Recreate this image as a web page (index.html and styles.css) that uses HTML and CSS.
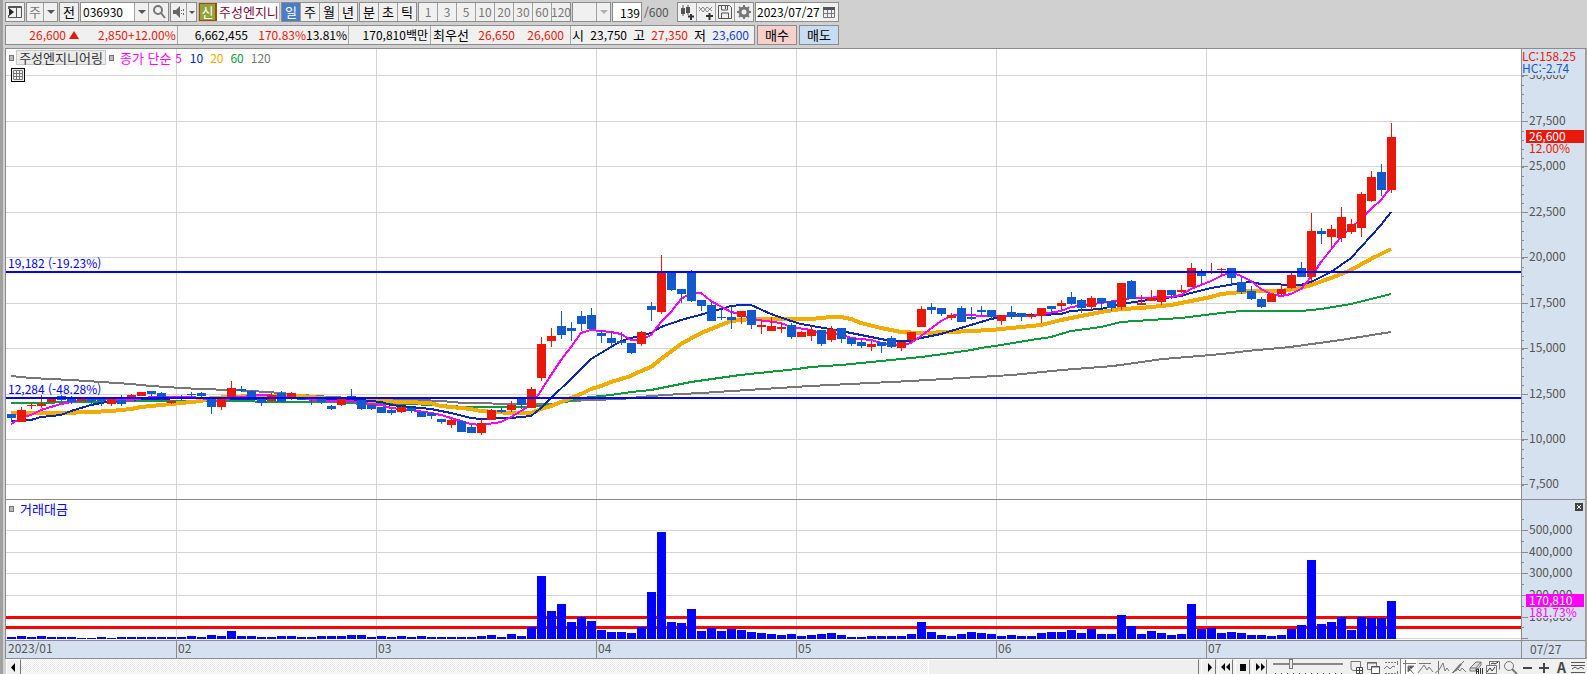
FILE: index.html
```html
<!DOCTYPE html>
<html lang="ko">
<head>
<meta charset="utf-8">
<title>주성엔지니어링 차트</title>
<link rel="stylesheet" href="styles.css">
</head>
<body>
<div class="window">
<header class="toolbar">
  <button class="btn icon-btn" aria-label="패널"><svg width="16" height="14"><path d="M1.500 4V1.500H14.500V12.500H1.500V10M9.500 2V12M1 2.500H15" fill="none" stroke="#555"/><path d="M2 3v8l5-4z" fill="#222"/></svg></button>
  <div class="group combo-kind">
    <span class="cell muted">주</span><button class="cell drop" aria-label="종류 선택"><i class="caret"></i></button>
  </div>
  <button class="btn sq">전</button>
  <div class="group code">
    <input class="field code-field" value="036930" aria-label="종목코드"><button class="cell drop" aria-label="종목 목록"><i class="caret"></i></button>
    <button class="cell search" aria-label="검색"><svg width="16" height="16"><circle cx="7" cy="6" r="4" fill="none" stroke="#777" stroke-width="2"/><path d="M10 9l4 5" stroke="#777" stroke-width="2"/></svg></button>
  </div>
  <div class="group sound">
    <button class="cell" aria-label="소리"><svg width="16" height="14"><path d="M2 5h3l4-4v12L5 9H2z" fill="#666"/><path d="M10.500 5v1M10.500 8v1M12.500 4v2M12.500 8v2" stroke="#666"/></svg></button><button class="cell drop narrow" aria-label="소리 메뉴"><i class="caret small"></i></button>
  </div>
  <div class="stock"><span class="credit">신</span><span class="stock-name">주성엔지니</span></div>
  <div class="group tabs">
    <button class="cell on">일</button><button class="cell">주</button><button class="cell">월</button><button class="cell">년</button>
  </div>
  <div class="group tabs">
    <button class="cell">분</button><button class="cell">초</button><button class="cell">틱</button>
  </div>
  <div class="group tabs minutes">
    <button class="cell">1</button><button class="cell">3</button><button class="cell">5</button><button class="cell">10</button><button class="cell">20</button><button class="cell">30</button><button class="cell">60</button><button class="cell">120</button>
  </div>
  <div class="group blank"><span class="cell"></span><button class="cell drop" disabled aria-label="주기"><i class="caret pale"></i></button></div>
  <div class="count"><input class="group field count-field" value="139" aria-label="봉 개수"><span class="total">/600</span></div>
  <div class="group tools">
    <button class="cell" aria-label="봉 추가"><svg width="16" height="16"><path d="M2 4h4v6H2zM7 3h4v6H7z" fill="#555"/><path d="M4 1v11M9 1v10" stroke="#555"/><path d="M9 12.500h6M12 10v6" stroke="#333" stroke-width="2"/></svg></button><button class="cell" aria-label="지표 추가"><svg width="16" height="16"><path d="M1 7l4-4 4 5 5-5M1 3l4 5 4-5 5 4" fill="none" stroke="#888"/><path d="M8 12h7M11.500 9v7" stroke="#333" stroke-width="2"/></svg></button><button class="cell" aria-label="저장"><svg width="16" height="16"><path d="M1.500 1.500h11l2 2v11h-13zM4.500 2v4h6V2M4.500 14V9h7v5M8.500 2v3" fill="none" stroke="#555"/></svg></button><button class="cell" aria-label="설정"><svg width="16" height="16"><circle cx="8" cy="8" r="4" fill="none" stroke="#777" stroke-width="3"/><path d="M8 1v3M8 12v3M1 8h3M12 8h3M3 3l2 2M11 11l2 2M3 13l2-2M11 5l2-2" stroke="#777" stroke-width="2"/></svg></button>
  </div>
  <div class="group date"><input class="field date-field" value="2023/07/27" aria-label="날짜"><button class="cell" aria-label="달력"><svg width="14" height="13"><path d="M1.500 2.500h11v9h-11zM5.500 3v8M9.500 3v8M2 7.500h11" fill="none" stroke="#777"/><path d="M1 1h12v3H1z" fill="#555"/></svg></button></div>
</header>

<div class="quote-row">
  <div class="quote">
    <span class="q q1 up">26,600</span><i class="tri"></i><span class="q q2 up">2,850</span><span class="q q3 up sep">+12.00%</span>
    <span class="q q4">6,662,455</span><span class="q q5 up">170.83%</span><span class="q q6 sep">13.81%</span>
    <span class="q q7 sep">170,810백만</span>
    <span class="q q8">최우선</span><span class="q q9 up">26,650</span><span class="q q10 up sep">26,600</span>
    <span class="q q11">시</span><span class="q q12">23,750</span><span class="q q13">고</span><span class="q q12 up">27,350</span><span class="q q13">저</span><span class="q q12 down">23,600</span>
  </div>
  <button class="order buy">매수</button>
  <button class="order sell">매도</button>
</div>

<main class="chart">
  <section class="plot price">
    <svg id="price" role="img" aria-label="일봉 차트"></svg>
    <div class="legend">
      <i class="dot"></i><button class="name">주성엔지니어링</button><i class="dot"></i>
      <span class="ma5">종가 단순&nbsp;<b>5</b></span><span class="ma10">10</span><span class="ma20">20</span><span class="ma60">60</span><span class="ma120">120</span>
    </div>
    <button class="grid-btn" aria-label="표 보기"><svg width="10" height="10"><path d="M.5.500h9v9h-9zM3.500 0v10M6.500 0v10M0 3.500h10M0 6.500h10" fill="none" stroke="#777"/></svg></button>
  </section>
  <section class="axis price-axis"><svg id="price-axis"></svg></section>
  <section class="plot volume">
    <svg id="volume" role="img" aria-label="거래대금"></svg>
    <div class="legend"><i class="dot"></i><span class="vol-name">거래대금</span></div>
  </section>
  <section class="axis volume-axis"><svg id="volume-axis"></svg><button class="close" aria-label="닫기"><svg width="8" height="8"><path d="M2 2l4 4M6 2l-4 4" stroke="#fff"/></svg></button></section>
  <section class="dates"><svg id="dates"></svg></section>
  <section class="axis last-date">07/27</section>
</main>

<footer class="bottom">
  <button class="nav" aria-label="왼쪽"><svg width="14" height="14"><path d="M8 3v9L4 7.500z"/></svg></button>
  <div class="track"><div class="thumb"></div></div>
  <div class="player">
    <button class="nav" aria-label="재생"><svg width="14" height="14"><path d="M6 3v9l4-4.500z"/></svg></button>
    <button class="nav" aria-label="뒤로"><svg width="14" height="14"><path d="M6 3v8L2 7zM11 3v8L7 7z"/></svg></button>
    <button class="nav" aria-label="정지"><svg width="14" height="14"><path d="M4 4h6v7H4z"/></svg></button>
    <button class="nav" aria-label="앞으로"><svg width="14" height="14"><path d="M3 3v8l4-4zM8 3v8l4-4z"/></svg></button>
  </div>
  <input class="zoomer" type="range" min="0" max="100" value="24" aria-label="확대">
  <div class="draw">
    <button aria-label="새 창"><svg width="17" height="15"><path d="M2 1.500h9.500v9H4L2 9z"/><path d="M7.500 7.500h6v6h-6zM7 10.500h7M10.500 7v7" fill="#fff" stroke="#444"/></svg></button>
    <button aria-label="창 복사"><svg width="17" height="15"><path d="M1.500 2.500h9v7h-9z"/><path d="M5.500 6.500h8v7h-8z" fill="#fff" stroke="#555"/><path d="M1 3h10M5 7h9" stroke="#555"/></svg></button>
    <button aria-label="구간"><svg width="17" height="15"><path d="M2 2.500h12M2 13.500h12" stroke-dasharray="2 1"/><path d="M1 9l3-3 3 3 3-3 2 1M14.500 1v4M14.500 11v4"/></svg></button>
    <button class="on" aria-label="선택"><svg width="17" height="15"><path d="M4.500 0v15M2 3.500h13"/><path d="M7 6v6l2-2 4 4M7 6h6l-3 3" fill="#555"/></svg></button>
    <button aria-label="수평선"><svg width="17" height="15"><path d="M2 3.500h12M1 13l6-8 3 5 2-3 4 5"/></svg></button>
    <button aria-label="수직선"><svg width="17" height="15"><path d="M4.500 1v14M1 13l4-3 4-7 2 8 2-3 2 3"/></svg></button>
    <button aria-label="추세선"><svg width="17" height="15"><path d="M2 13L13 1M1 13l5-5 3 3 2-3 4 4"/><path d="M4 11l6-7" stroke-width="2"/></svg></button>
    <button aria-label="모두 지우기"><svg width="17" height="15"><path d="M2 8l6-6h5v3L8 11H2zM2 8h6v3M8 8l5-6" fill="#ddd"/><path d="M8.500 14V9h2v5M8 11.500h3M12.500 8v6M14.500 8v6" stroke="#333"/></svg></button>
    <button aria-label="차트 복사"><svg width="17" height="15"><path d="M4.500 1.500h10v8M4.500 1v4M1.500 5.500h10v8h-10z"/><path d="M2 12l3-4 2 3 3-4M6 4l2-1 2 1 3-2" stroke="#333"/></svg></button>
    <button aria-label="돋보기"><svg width="17" height="15"><circle cx="7" cy="6" r="4.500"/><path d="M10 9l5 5" stroke-width="2"/></svg></button>
    <button aria-label="축소"><svg width="17" height="15"><path d="M4 8h9" stroke="#444" stroke-width="2"/></svg></button>
    <button aria-label="확대"><svg width="17" height="15"><path d="M3 8h10M8 3v10" stroke="#444" stroke-width="2"/></svg></button>
    <button class="letter" aria-label="글자">A</button>
    <button aria-label="목록"><svg width="17" height="15"><path d="M1 2.500h14M1 5.500h14M2 9l3-2 3 2 3-2 3 2M1 12.500h14" stroke="#555"/></svg></button>
  </div>
</footer>
</div>
<script src="chart.js"></script>
</body>
</html>
```

FILE: styles.css
```css
* { box-sizing: border-box; }
:root {
  --line: #8c8c8c;
  --axis: #d6e1ef;
  --red: #e8190a;
  --blue: #125acb;
  --face: #f0f0f0;
}
body {
  margin: 0;
  height: 100vh;
  overflow: hidden;
  background: #d0d0d0;
  font-family: "Noto Sans CJK KR", sans-serif;
  font-size: 12px;
  line-height: 18px;
  color: #000;
}
button, input { font: inherit; color: inherit; margin: 0; padding: 0; border: 0; border-radius: 0; background: none; }
button { display: flex; align-items: center; justify-content: center; }
svg { display: block; flex: none; }
.window { min-height: 100vh; border-left: 3px solid #a0a0a0; padding-left: 2px; display: flex; flex-direction: column; }

.toolbar { display: flex; gap: 1px; height: 24px; padding-top: 2px; align-items: flex-start; white-space: nowrap; }
.group, .btn { display: flex; height: 20px; border: 1px solid var(--line); background: var(--face); }
.btn { flex: none; width: 20px; font-size: 13px; }
.group { flex: none; }
.cell { display: flex; align-items: center; justify-content: center; height: 18px; flex: 1; min-width: 0; }
.cell + .cell { border-left: 1px solid #a0a0a0; }
.field { background: #fff; }
.drop { flex: none; width: 14px; border-left: 1px solid #a0a0a0; }
.drop.narrow { width: 10px; }
.caret { border: 4px solid transparent; border-top-color: #555; border-bottom: 0; }
.caret.small { border-width: 3px; border-bottom: 0; }
.caret.pale { border-top-color: #b0b0b0; }
.combo-kind { width: 32px; font-size: 13px; }
.muted { color: #777; }
.code { width: 89px; }
.code-field { width: 53px; padding-left: 2px; }
.sound { width: 27px; }
.stock { display: flex; width: 82px; height: 20px; flex: none; background: #fff; border: 1px solid #bbb; font-size: 13px; overflow: hidden; }
.credit { width: 19px; flex: none; margin: -1px 0 -1px -1px; border: 2px solid #a04c0c; background: #93a33a; color: #fff; line-height: 16px; text-align: center; }
.stock-name { color: #7a0a3c; padding-left: 2px; }
.tabs { width: 77px; font-size: 13px; }
.tabs + .tabs { width: 58px; }
.tabs.minutes { width: 153px; color: #777; font-size: 12px; }
.tabs .on { background: #4a7dc4; color: #fff; }
.blank { width: 39px; }
.count { display: flex; flex: none; width: 64px; }
.count-field { width: 30px; text-align: right; padding-right: 1px; }
.total { padding-left: 2px; color: #555; line-height: 20px; }
.tools { width: 77px; }
.date { width: 84px; }
.date-field { width: 64px; padding-left: 1px; }

.quote-row { display: flex; gap: 2px; height: 24px; padding-top: 1px; white-space: nowrap; }
.quote { display: flex; width: 750px; height: 20px; border: 1px solid var(--line); background: var(--face); }
.q { flex: none; text-align: right; }
.sep { border-right: 1px solid #a8a8a8; padding-right: 2px; }
.q1 { width: 60px; }
.tri { width: 10px; height: 0; margin: 5px 0 0 3px; border: 5px solid transparent; border-bottom: 8px solid var(--red); border-top: 0; }
.q2 { width: 49px; }
.q3 { width: 50px; }
.q4 { width: 70px; }
.q5 { width: 58px; }
.q6 { width: 43px; }
.q7 { width: 82px; }
.q8 { width: 38px; font-size: 13px; }
.q9 { width: 46px; }
.q10 { width: 56px; padding-right: 6px; }
.q11 { width: 13px; font-size: 13px; }
.q12 { width: 43px; }
.q13 { width: 18px; font-size: 13px; }
.up { color: var(--red); }
.down { color: #1240d0; }
.order { width: 40px; height: 20px; border: 1px solid var(--line); font-size: 13px; }
.buy { background: #f6d0ca; }
.sell { background: #c6ddf3; }

.chart { display: grid; grid-template-columns: 1fr 64px; border: 1px solid var(--line); border-right: 2px solid #a0a0a0; }
.plot { position: relative; background: #fff; border-bottom: 1px solid var(--line); }
.plot > svg, .axis > svg, .dates > svg { width: 100%; }
.axis > svg, .dates > svg { overflow: visible; }
.price > svg, .price-axis > svg { height: 450px; }
.volume > svg, .volume-axis > svg { height: 140px; }
.dates > svg { height: 17px; }
.axis, .dates { background: var(--axis); }
.axis { position: relative; border-left: 1px solid var(--line); border-bottom: 1px solid var(--line); }
.chart .last-date { border-bottom: 0; padding-left: 8px; line-height: 15px; color: #555; }
.legend { position: absolute; left: 3px; top: 1px; display: flex; align-items: center; gap: 2px; height: 15px; line-height: 14px; }
.dot { width: 5px; height: 6px; border: 1px solid #777; background: #bbb; }
.name { width: 90px; height: 15px; border: 1px solid #c8c8c8; background: #ebebeb; color: #333; margin-right: 1px; font-size: 13px; }
.legend span { margin-right: 5px; }
.legend .ma5 { color: #f0f; padding-left: 4px; margin-right: 6px; font-size: 13px; }
.ma5 b { font-size: 12px; font-weight: normal; }
.ma10 { color: #0a28aa; }
.ma20 { color: #f0ac00; }
.ma60 { color: #0f9b3c; }
.ma120 { color: #777; }
.vol-name { color: #00f; padding-left: 4px; font-size: 13px; }
.grid-btn { position: absolute; left: 5px; top: 19px; width: 14px; height: 14px; border: 1px solid #000; background: #eee; }
.close { position: absolute; right: 2px; top: 3px; width: 8px; height: 8px; background: #444; }

.grid { fill: #d5d5d5; }
.tick { fill: #8c8c8c; }
.label { fill: #555; }
.level { fill: #00f; }
.alert { fill: #f00; }
.bar { fill: #00f; }
.rise { fill: var(--red); }
.fall { fill: var(--blue); }
.line { fill: none; stroke-width: 2; shape-rendering: crispEdges; }
.l5 { stroke: #f0f; }
.l10 { stroke: #0a28aa; }
.l20 { stroke: #f0ac00; stroke-width: 4; }
.l60 { stroke: #0f9b3c; }
.l120 { stroke: #777; }
.hc { fill: var(--blue); }
.white { fill: #fff; }
.pink { fill: #f0f; }
.cover { fill: var(--axis); }

.bottom { display: flex; height: 16px; background: var(--face); margin-left: 1px; }
.nav { width: 15px; height: 16px; border: 1px solid #fff; border-right: 1px solid #777; background: var(--face); }
.track { flex: 1; display: flex; justify-content: flex-end; background: repeating-conic-gradient(#fff 0 25%, #ececec 0 50%) 0 0 / 2px 2px; }
.thumb { width: 23%; border: 1px solid #fff; border-right-color: #777; background: #efefef; }
.player { display: flex; gap: 2px; padding-left: 2px; }
.zoomer { width: 70px; height: 16px; margin: 0 6px; appearance: none; background: linear-gradient(90deg, #333 1px, transparent 1px) 2px 14px / 6px 1px repeat-x; }
.zoomer::-webkit-slider-runnable-track { height: 2px; margin-top: -6px; background: #888; }
.zoomer::-webkit-slider-thumb { appearance: none; width: 4px; height: 10px; margin-top: -4px; border: 1px solid #777; background: #eee; }
.draw { display: flex; }
.draw button { width: 17px; height: 16px; }
.draw .on { background: #fff; border-left: 1px solid #888; }
.draw svg { fill: none; stroke: #777; }
.draw .letter { color: #444; font-weight: bold; font-size: 14px; }
```

FILE: chart.js
```js
// One row per trading day: direction (1 rise, 0 fall), high, body top, body bottom, low.
const candles = `
0,414,414,418,422 1,407,410,422,422 1,403,405,406,409 1,395,404,406,408 1,397,398,402,402 0,395,396,400,401
0,396,397,402,404 1,398,399,401,401 0,398,399,401,405 0,398,399,401,406 1,399,399,404,406 0,395,400,404,406
1,394,395,397,398 1,392,392,396,396 0,391,391,394,396 0,392,393,399,402 1,401,401,403,404 0,395,397,399,400
0,392,394,395,397 0,392,393,396,397 0,398,398,407,414 1,398,399,407,410 1,381,388,397,397 0,386,389,391,392
0,390,391,399,399 0,398,399,403,406 1,393,395,401,401 0,391,393,402,402 1,392,393,399,400 0,398,399,400,400
0,397,398,399,405 0,399,399,402,404 0,405,406,409,410 1,398,399,405,406 0,389,396,399,399 0,400,400,409,410
0,404,405,409,410 0,407,407,413,413 0,409,410,413,415 1,406,407,412,413 0,407,408,411,413 0,412,412,417,417
0,413,413,416,419 0,419,419,422,424 1,418,420,425,428 0,421,421,432,432 0,425,427,433,433 1,419,423,433,435
1,409,410,420,420 0,408,410,412,413 1,401,405,410,412 0,398,399,405,409 1,387,389,408,408 1,337,344,378,381
1,328,336,341,347 0,311,326,335,339 0,322,328,331,341 0,311,316,324,331 0,308,315,329,330 0,330,333,336,343
0,331,338,343,346 0,332,341,343,345 0,343,343,353,354 1,331,332,344,346 0,302,306,310,321 1,255,272,312,314
0,271,272,290,291 0,289,289,294,303 0,270,272,301,302 0,300,300,306,311 0,302,305,321,321 0,310,317,318,320
0,307,317,320,329 1,311,311,317,324 0,310,310,325,329 1,320,325,327,334 1,317,326,331,331 1,323,327,329,333
0,323,325,337,339 1,331,332,337,337 1,326,330,336,341 0,330,330,344,346 1,326,329,340,342 0,328,328,339,343
0,338,338,344,346 0,339,342,346,348 1,341,344,347,351 0,342,342,346,353 0,336,338,347,348 1,342,342,348,351
1,332,332,340,342 1,306,309,327,327 0,303,307,310,314 0,308,308,314,316 1,313,315,318,320 0,306,308,322,322
0,307,317,319,320 0,306,310,312,315 0,310,310,317,319 1,315,315,321,325 0,306,312,317,319 0,313,313,317,321
1,313,315,317,319 1,308,308,316,323 0,306,306,309,314 1,300,303,306,310 0,292,297,304,305 0,299,300,308,313
1,296,298,307,310 0,298,298,303,308 0,301,301,308,311 1,283,283,307,310 0,280,281,299,299 1,295,303,305,305
1,290,298,301,301 1,290,290,302,305 0,290,290,295,299 1,285,290,292,293 1,263,268,287,287 0,269,272,276,284
1,263,272,273,274 1,268,269,270,276 0,268,268,278,285 0,277,282,292,294 0,286,291,299,300 0,297,299,307,308
1,294,294,302,302 1,285,289,294,296 1,273,275,288,289 0,262,268,277,277 1,213,231,277,281 0,228,231,234,244
1,225,229,237,248 1,207,217,238,242 1,219,224,232,234 1,192,194,228,237 1,171,177,201,202 0,164,172,190,196
1,123,137,190,193`.trim().split(/\s+/).map(s => s.split(',').map(Number));

const turnover = [
  2,3,2,3,2,2,2,1,1,2,1,2,2,2,2,2,2,2,3,2,4,3,8,3,3,2,2,3,3,2,2,3,3,3,4,4,2,3,2,3,2,3,2,2,2,2,2,3,4,2,
  5,3,12,63,28,35,17,22,18,9,7,7,6,12,47,107,17,16,30,8,11,8,10,9,7,6,5,4,5,3,4,5,6,4,2,2,3,3,3,3,5,17,7,4,3,5,7,6,5,3,
  4,3,3,6,7,7,9,6,10,5,5,24,13,5,8,6,4,5,35,10,11,6,7,6,4,4,3,4,10,14,79,15,17,22,9,22,21,21,38];

const averages = {
  l120: '11,376 31,378 71,380 101,382 131,384 151,386 181,388 201,389 231,390 251,391 281,393 301,395 331,397 371,399 421,400 441,401 463,403 521,404 551,404 571,401 591,400 621,399 651,396 681,394 701,393 810,386 911,381 1012,375 1062,370 1113,366 1163,359 1211,355 1231,353 1247,351 1290,347 1341,340 1391,332',
  l60: '11,403 101,402 150,401 249,401 260,402 340,402 361,404 400,404 441,405 463,407 521,407 551,405 561,403 583,398 591,397 611,395 631,392 651,390 671,386 691,382 740,375 797,369 811,367 841,365 861,363 901,359 921,357 951,353 971,350 981,348 1001,345 1031,340 1051,337 1071,331 1101,327 1121,322 1151,320 1181,318 1221,313 1241,311 1301,311 1321,309 1351,304 1371,299 1391,294',
  l20: '11,413 61,413 91,412 111,411 131,409 141,407 171,404 191,402 201,401 211,398 251,396 301,396 341,400 380,401 430,403 441,406 471,409 480,411 511,413 531,413 541,409 551,406 561,402 571,398 581,394 591,389 601,386 611,382 631,376 641,371 651,367 661,359 681,344 701,333 721,325 731,321 751,319 811,319 831,317 841,317 851,319 861,323 881,328 901,332 921,333 951,332 991,330 1021,327 1041,325 1061,320 1081,316 1101,312 1121,309 1141,308 1171,305 1191,301 1211,297 1221,294 1251,291 1281,291 1301,288 1311,285 1331,278 1351,270 1371,259 1391,249',
  l10: '11,421 31,420 41,417 61,415 71,411 91,405 101,403 121,400 151,399 191,398 251,399 301,398 331,399 361,400 381,402 391,405 431,409 451,413 471,418 481,419 511,418 531,416 541,408 551,398 571,379 591,359 601,353 621,341 631,338 651,333 661,327 681,320 711,312 731,306 741,305 751,305 771,314 791,321 801,324 841,331 891,341 911,341 921,338 941,334 961,328 991,319 1001,317 1021,315 1041,315 1061,314 1071,311 1101,309 1121,304 1141,301 1181,296 1191,293 1211,288 1241,283 1251,282 1261,284 1301,285 1311,282 1321,277 1331,272 1351,258 1361,247 1381,225 1391,212',
  l5: '11,424 21,418 31,415 41,410 61,404 81,400 101,399 131,400 151,397 191,397 201,398 221,402 231,398 261,395 281,396 301,399 331,401 351,401 371,404 381,405 391,408 411,410 431,413 441,415 461,421 471,424 481,425 501,422 511,417 521,411 531,405 537,397 551,375 561,360 571,347 581,333 591,330 611,332 621,334 631,340 641,340 651,335 661,322 671,312 681,299 691,293 701,293 711,301 731,312 741,314 751,319 781,323 791,327 811,330 821,333 841,334 851,338 871,340 881,343 901,346 911,343 921,336 941,321 951,316 961,314 971,315 981,316 1031,316 1061,311 1071,307 1101,303 1121,300 1131,298 1151,298 1161,296 1171,297 1181,295 1191,289 1211,281 1221,276 1231,272 1241,276 1251,281 1261,289 1271,294 1281,296 1291,294 1301,289 1311,277 1321,262 1341,237 1361,219 1371,209 1381,200 1391,187'
};

const months = [[176, '02'], [376, '03'], [596, '04'], [796, '05'], [996, '06'], [1206, '07']];
const priceMarks = [[75, '30,000'], [121, '27,500'], [166, '25,000'], [212, '22,500'], [257, '20,000'], [303, '17,500'], [348, '15,000'], [394, '12,500'], [439, '10,000'], [484, '7,500']];
const volumeMarks = [[530, '500,000'], [552, '400,000'], [573, '300,000'], [595, '200,000'], [617, '100,000'], [638, '']];

const box = (cls, x, y, w, h) => `<rect class="${cls}" x="${x}" y="${y}" width="${w}" height="${h}"/>`;
const text = (cls, x, y, s) => `<text class="${cls}" x="${x}" y="${y}">${s}</text>`;
const draw = (id, dx, dy, body) => {
  document.getElementById(id).innerHTML = `<g transform="translate(${-dx},${-dy})">${body}</g>`;
};
const grid = (marks, top, height) =>
  marks.map(([y]) => box('grid', 6, y, '100%', 1)).join('') +
  months.map(([x]) => box('grid', x, top, 1, height)).join('');

draw('price', 6, 49,
  grid(priceMarks, 49, 450) +
  Object.entries(averages).map(([k, pts]) => `<polyline class="line ${k}" points="${pts}"/>`).join('') +
  candles.map(([up, hi, top, bottom, lo], i) => {
    const cls = up ? 'rise' : 'fall', x = 7 + 10 * i;
    return box(cls, x + 4, hi, 1, lo - hi) + box(cls, x, top, 9, bottom - top);
  }).join('') +
  box('level', 6, 271, '100%', 2) + box('level', 6, 397, '100%', 2) +
  text('level', 8, 268, '19,182 (-19.23%)') + text('level', 8, 394, '12,284 (-48.28%)'));

draw('volume', 6, 500,
  grid(volumeMarks, 500, 140) +
  box('alert', 6, 616, '100%', 3) + box('alert', 6, 626, '100%', 3) +
  turnover.map((h, i) => box('bar', 7 + 10 * i, 639 - h, 9, h)).join(''));

const minor = [];
for (let n = 0; n < 46; n++) minor.push(box('tick', 0, Math.round(76 + n * 9.09), 2, 1));
draw('price-axis', 0, 49,
  minor.join('') +
  priceMarks.map(([y, s]) => box('tick', 0, y, 6, 1) + text('label', 7, y + 4, s)).join('') +
  box('cover', 7, 60, 56, 15) +
  text('rise', 0, 61, 'LC:158.25') + text('hc', 0, 73, 'HC:-2.74') +
  box('rise', 4, 130, 58, 13) + text('white', 7, 141, '26,600') +
  text('rise', 7, 153, '12.00%'));

draw('volume-axis', 0, 500,
  [519, 541, 562, 584, 606, 627].map(y => box('tick', 0, y, 2, 1)).join('') +
  volumeMarks.map(([y, s]) => box('tick', 0, y, 6, 1) + text('label', 7, y + 4, s)).join('') +
  box('cover', 7, 607, 56, 11) +
  box('pink', 4, 594, 58, 13) + text('white', 7, 605, '170,810') +
  text('pink', 7, 617, '181.73%'));

draw('dates', 6, 641,
  text('label', 8, 653, '2023/01') +
  months.map(([x, s]) => box('tick', x, 641, 1, 17) + text('label', x + 2, 653, s)).join(''));
```
